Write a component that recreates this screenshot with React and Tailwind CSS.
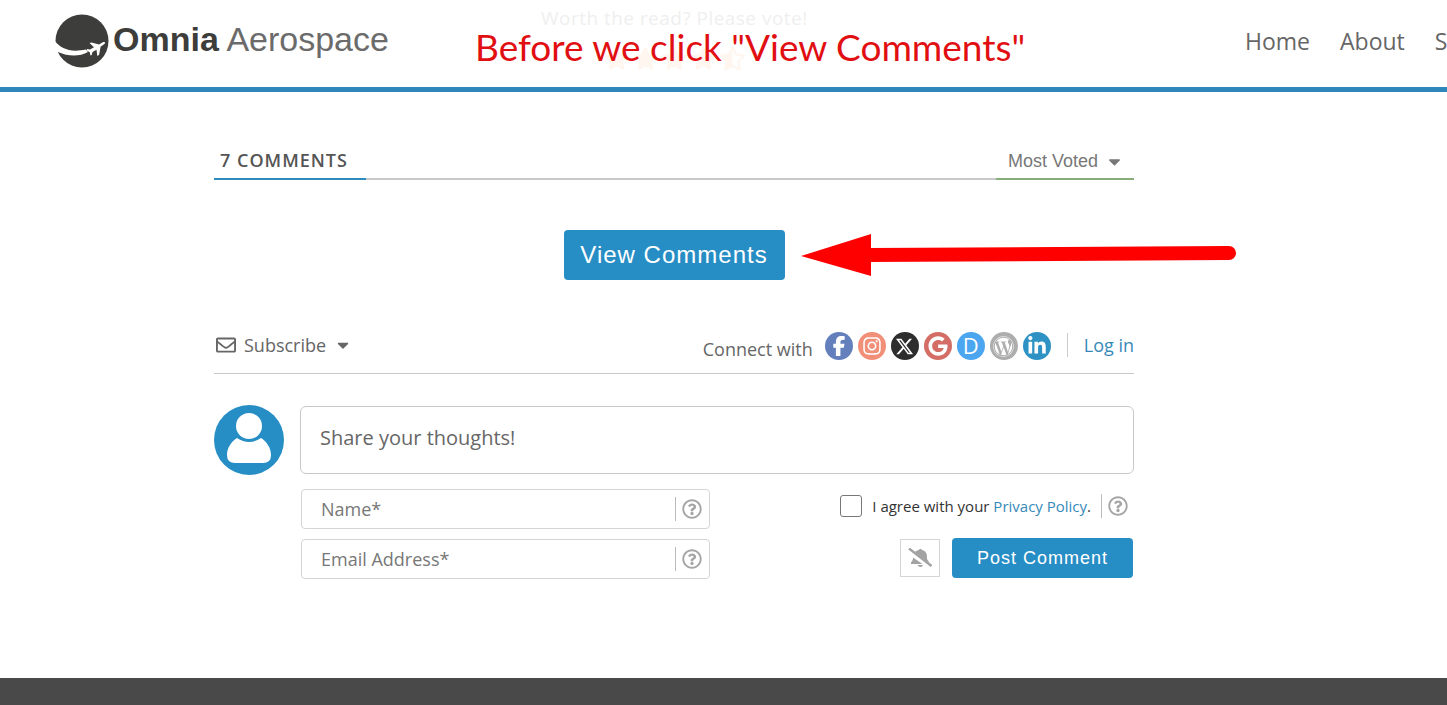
import { FaCaretDown, FaGoogle, FaInstagram, FaRegEnvelope, FaRegQuestionCircle, FaStar, FaStarHalfAlt } from "react-icons/fa";
import { FaFacebookF, FaLinkedinIn, FaWordpress, FaXTwitter } from "react-icons/fa6";

const socials = [
  { name: "Facebook", color: "bg-[#6380bd]", icon: <FaFacebookF size={20} /> },
  { name: "Instagram", color: "bg-[#f28f78]", icon: <FaInstagram size={20} /> },
  { name: "X", color: "bg-[#2d2d2d]", icon: <FaXTwitter size={19} /> },
  { name: "Google", color: "bg-[#d36d66]", icon: <FaGoogle size={20} /> },
  { name: "Disqus", color: "bg-[#4ca5ef]", icon: <span className="pb-0.5 text-[22px] leading-none font-medium">D</span> },
  { name: "WordPress", color: "bg-[#adadad]", icon: <FaWordpress size={21} /> },
  { name: "LinkedIn", color: "bg-[#2e93c4]", icon: <FaLinkedinIn size={20} /> },
];

const Logo = () => (
  <a href="#" className="flex items-center gap-1 text-[#3d3d3b]">
    <svg viewBox="0 0 54 54" className="size-[54px] shrink-0">
      <circle cx="27" cy="27" r="26.5" fill="currentColor" />
      <path d="M-1 26C5 34 14 39 31 35.500L33 38C25 42.500 14 43 3 38L-1 37Z" fill="#fff" />
      <path d="M32 35l3 .5 4-2.3-4.5-4.2 2-.5 7.500 2 3.800-2.300c2-.8 3.200.3 1.600 1.800l-3.800 2.700-1.500 8-1.800 1.200-.8-6.200-4 2.200-.8 3-1.300.7-.5-3-3.300-2.400z" fill="#fff" />
    </svg>
    <span className="pb-1 font-['Liberation_Sans',sans-serif] text-[34px] leading-10 whitespace-nowrap">
      <b>Omnia</b> <span className="text-[#6b6b6b]">Aerospace</span>
    </span>
  </a>
);

const Field = ({ id, type, label }) => (
  <div className="flex h-10 items-center rounded border border-[#d5d5d5] pr-[7px]">
    <label htmlFor={id} className="sr-only">{label}</label>
    <input
      id={id}
      type={type}
      placeholder={label}
      className="h-full min-w-0 flex-1 px-[19px] text-lg outline-none placeholder:text-[#777]"
    />
    <button type="button" aria-label={`About ${label}`} className="flex h-6 items-center border-l border-[#bbb] pl-1.5 text-[#a5a5a5]">
      <FaRegQuestionCircle size={20} />
    </button>
  </div>
);

const Header = () => (
  <header className="relative flex h-[92px] items-start overflow-hidden border-b-[5px] border-[#2e86b9] pl-[55px]">
    <div className="absolute top-1 left-[541px] text-center text-[#efefef]">
      <p className="text-[19px] leading-7 tracking-wide whitespace-nowrap">Worth the read? Please vote!</p>
      <div className="mt-3.5 flex justify-center gap-1 text-[#fef6ef]">
        <FaStar size={25} />
        <FaStar size={25} />
        <FaStar size={25} />
        <FaStar size={25} />
        <FaStarHalfAlt size={25} />
      </div>
    </div>
    <div className="relative mt-3.5 w-[334px] shrink-0">
      <Logo />
    </div>
    <h1 className="relative mt-[22px] ml-[86px] shrink-0 font-['Lato',sans-serif] text-[37px] leading-[50px] whitespace-nowrap text-[#e10f12]">
      Before we click "View Comments"
    </h1>
    <nav className="mt-[23px] ml-auto flex w-[202px] shrink-0 gap-[30px] text-[23px] leading-9 whitespace-nowrap text-[#666]">
      <a href="#">Home</a>
      <a href="#">About</a>
      <a href="#">Services</a>
    </nav>
  </header>
);

const ThreadBar = () => (
  <div className="flex h-10 items-stretch">
    <h2 className="w-[152px] border-b-2 border-[#2e8bbd] pl-1.5 text-lg leading-10 font-semibold tracking-[1px] whitespace-nowrap text-[#555]">
      7 COMMENTS
    </h2>
    <div className="flex-1 border-b-2 border-[#c8c8c8]" />
    <div className="relative w-[138px] border-b-2 border-[#85ae78] text-[#777]">
      <select
        aria-label="Sort comments"
        className="h-full w-full appearance-none pt-1 pl-3 font-['Liberation_Sans',sans-serif] text-lg outline-none"
      >
        <option>Most Voted</option>
        <option>Newest</option>
        <option>Oldest</option>
      </select>
      <FaCaretDown size={19} className="pointer-events-none absolute top-3 right-2.5" />
    </div>
  </div>
);

const ViewComments = () => (
  <div className="mt-[50px] flex justify-center">
    <div className="relative">
      <button
        type="button"
        className="h-[50px] w-[221px] rounded bg-[#278dc5] font-['Liberation_Sans',sans-serif] text-2xl tracking-[1px] whitespace-nowrap text-white"
      >
        View Comments
      </button>
      <svg viewBox="0 0 436 44" className="absolute top-1 left-full ml-4 h-11 w-[436px]">
        <path d="M0 22L70 0V42Z" fill="#f00" />
        <path d="M66 21L428 19" stroke="#f00" strokeWidth="14" strokeLinecap="round" />
      </svg>
    </div>
  </div>
);

const ConnectBar = () => (
  <div className="mt-[49px] flex h-[45px] items-start justify-between border-b border-[#c8c8c8] text-lg leading-8 text-[#666]">
    <button type="button" className="flex items-center gap-2">
      <FaRegEnvelope size={20} className="ml-0.5" />
      Subscribe
      <FaCaretDown size={18} />
    </button>
    <div className="flex items-start">
      <span className="mt-1">Connect with</span>
      <div className="mt-[3px] ml-3 flex gap-[5px]">
        {socials.map((s) => (
          <button
            key={s.name}
            type="button"
            aria-label={s.name}
            className={`flex size-7 items-center justify-center rounded-full text-white ${s.color}`}
          >
            {s.icon}
          </button>
        ))}
      </div>
      <a href="#" className="mt-1 ml-4 border-l border-[#ccc] pl-4 leading-6 text-[#378ab8]">Log in</a>
    </div>
  </div>
);

const CommentForm = () => (
  <form className="mt-[31px] flex gap-4" onSubmit={(e) => e.preventDefault()}>
    <svg viewBox="0 0 70 70" className="size-[70px] shrink-0">
      <circle cx="35" cy="35" r="35" fill="#278dc5" />
      <circle cx="35" cy="21" r="13" fill="#fff" />
      <path d="M23 33Q35 41 47 33C53 37 57 43 57 50Q57 58 49 58H21Q13 58 13 50C13 43 17 37 23 33Z" fill="#fff" />
    </svg>
    <div className="min-w-0 flex-1 pt-px">
      <textarea
        aria-label="Comment"
        placeholder="Share your thoughts!"
        className="block h-[68px] w-full resize-none rounded-md border border-[#c8c8c8] px-[19px] py-[15px] text-xl leading-8 outline-none placeholder:text-[#666]"
      />
      <div className="mt-[15px] flex justify-between">
        <div className="ml-px w-[409px] space-y-2.5">
          <Field id="name" type="text" label="Name*" />
          <Field id="email" type="email" label="Email Address*" />
        </div>
        <div className="flex flex-col items-end">
          <div className="mt-[5px] mr-1.5 flex h-6 items-center text-[15px] text-[#333]">
            <input
              id="agree"
              type="checkbox"
              className="mr-2.5 size-[22px] appearance-none rounded-[3px] border border-[#777] checked:bg-[#278dc5]"
            />
            <label htmlFor="agree" className="whitespace-nowrap">
              I agree with your <a href="#" className="text-[#378ab8]">Privacy Policy</a>.
            </label>
            <button type="button" aria-label="About the privacy policy" className="ml-2.5 flex h-6 items-center border-l border-[#bbb] pl-1.5 text-[#a5a5a5]">
              <FaRegQuestionCircle size={20} />
            </button>
          </div>
          <div className="mt-5 mr-px flex items-center gap-3">
            <button
              type="button"
              aria-label="Reply notifications off"
              className="flex h-[38px] w-10 items-center justify-center border border-[#d5d5d5] text-[#a3a3a3]"
            >
              <svg viewBox="0 0 24 20" className="h-5 w-6" fill="currentColor">
                <path d="M7 4C8 3 9.500 2.200 11 2C11 .6 14 .6 14 2C18 2.800 19 6 19 9V11L21 14H18ZM5 9.500L14.500 16H3V14.500C4.500 13 5 11.500 5 9.500ZM9.500 17H15C14.500 19.500 10.500 19.500 9.500 17Z" />
                <path d="M1 1.500L23 19" stroke="#fff" strokeWidth="3.500" />
                <path d="M1 0.500L23.500 18" stroke="currentColor" strokeWidth="2.400" />
              </svg>
            </button>
            <button
              type="submit"
              className="h-10 w-[181px] rounded bg-[#278dc5] font-['Liberation_Sans',sans-serif] text-lg tracking-[1px] whitespace-nowrap text-white"
            >
              Post Comment
            </button>
          </div>
        </div>
      </div>
    </div>
  </form>
);

export default function App() {
  return (
    <div className="flex min-h-screen flex-col overflow-x-hidden bg-white font-['Open_Sans',sans-serif]">
      <Header />
      <main className="flex-1 pt-12 pr-[99px] pb-[99px]">
        <section className="mx-auto max-w-[920px]">
          <ThreadBar />
          <ViewComments />
          <ConnectBar />
          <CommentForm />
        </section>
      </main>
      <footer className="h-[27px] bg-[#494949]" />
    </div>
  );
}
